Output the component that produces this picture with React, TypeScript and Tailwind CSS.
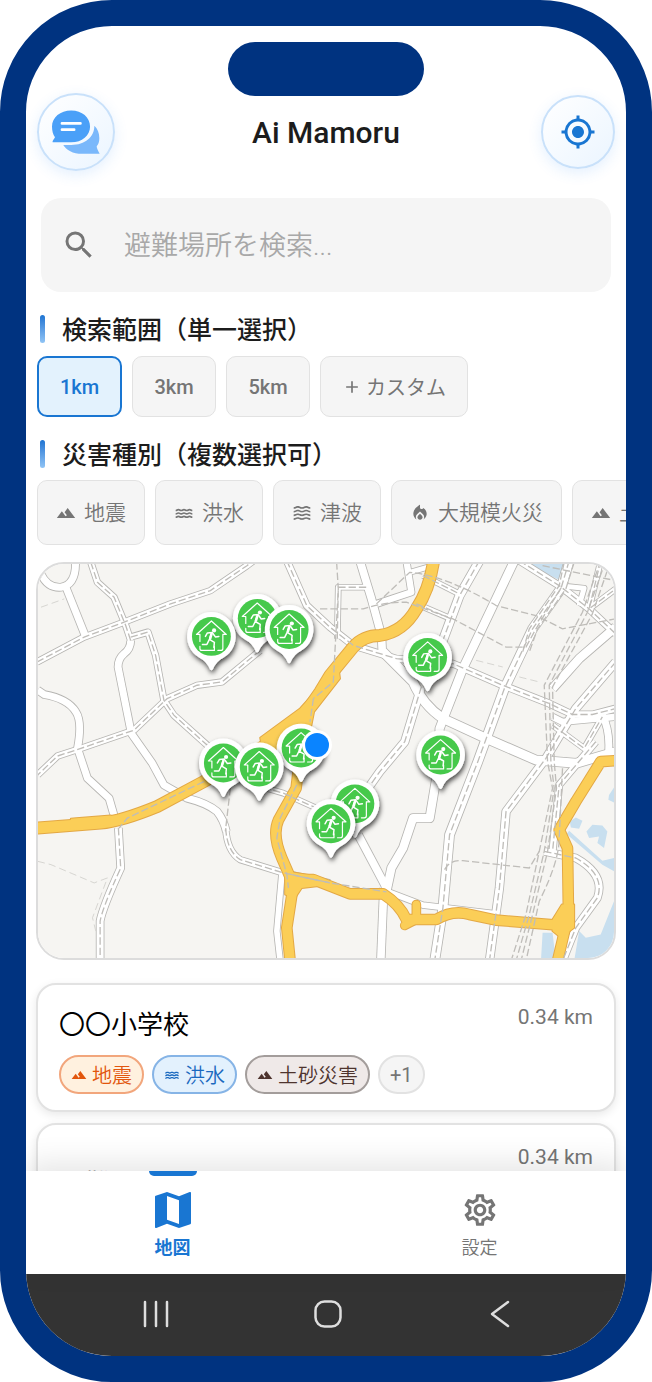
import React from 'react';
import {
  MdAdd,
  MdLocalFireDepartment,
  MdMap,
  MdMyLocation,
  MdOutlineSettings,
  MdSearch,
  MdTerrain,
  MdWater,
  MdWaves,
} from 'react-icons/md';

type Road = { d: string; w: number; dash?: boolean };

const roads: Road[] = [
  { d: 'M30 55Q50 98 90 95Q135 88 134 20', w: 26 },
  { d: 'M105 95L165 245', w: 26 },
  { d: 'M300 255Q300 280 280 295Q262 310 262 335L285 450L302 535L365 625L400 690L470 730Q530 745 560 770Q580 795 588 830', w: 26 },
  { d: 'M180 20L200 80L250 125L285 210L300 255', w: 22, dash: true },
  { d: 'M586 820Q590 890 630 915L760 955L900 985', w: 22, dash: true },
  { d: 'M18 320L160 245L280 200L420 145L540 105L650 30L670 15', w: 22, dash: true },
  { d: 'M300 245L352 230L375 300L400 435L430 480L530 570L600 640', w: 22, dash: true },
  { d: 'M690 285L575 380L500 390L410 430L310 525L150 580L80 603L20 660', w: 22, dash: true },
  { d: 'M20 405L40 418Q110 430 135 470Q155 500 140 580L170 670L235 730L258 810', w: 26 },
  { d: 'M263 820L270 940Q215 1060 208 1100V1220', w: 26, dash: true },
  { d: 'M755 960L740 1130L750 1220', w: 22 },
  { d: 'M640 680L760 715L860 760', w: 20, dash: true },
  { d: 'M770 15L830 150L900 215L970 270L1100 310L1270 325L1420 390L1560 445L1630 478H1690L1760 460', w: 24, dash: true },
  { d: 'M922 250L925 95H1010', w: 20, dash: true },
  { d: 'M990 15L1025 130L1055 240L1058 300', w: 28 },
  { d: 'M1130 15L1145 110L1040 145', w: 24 },
  { d: 'M1140 50L1210 30', w: 20 },
  { d: 'M1180 60L1290 115', w: 20, dash: true },
  { d: 'M1160 145L1265 190', w: 20, dash: true },
  { d: 'M1350 15L1290 120L1238 260', w: 30, dash: true },
  { d: 'M1175 395L1125 560L1050 650L990 735', w: 28, dash: true },
  { d: 'M1455 15L1300 340L1230 520L1225 640L1215 700L1200 790H1150L1120 880L1085 940L1070 1010', w: 30 },
  { d: 'M1060 290L1150 380Q1180 450 1240 490L1370 550L1520 615L1640 625L1760 590', w: 32 },
  { d: 'M1620 15L1595 100L1510 220L1425 400L1345 620L1260 840L1240 1060L1215 1220', w: 32, dash: true },
  { d: 'M1470 15L1590 90L1680 160L1760 235', w: 24, dash: true },
  { d: 'M1590 90L1665 98L1650 150', w: 20 },
  { d: 'M1760 215L1650 310L1570 400', w: 30 },
  { d: 'M1760 320L1640 460L1550 610L1430 770L1410 1000L1380 1220', w: 28, dash: true },
  { d: 'M1715 15L1680 160L1760 100', w: 20, dash: true },
  { d: 'M1570 485L1600 500L1760 485', w: 24 },
  { d: 'M1570 510L1665 580L1720 485', w: 20, dash: true },
  { d: 'M1720 480Q1745 530 1738 600', w: 26 },
  { d: 'M1700 560L1590 690L1570 890', w: 24, dash: true },
  { d: 'M1545 890L1640 910Q1730 960 1705 1030L1640 1120L1600 1220', w: 26, dash: true },
  { d: 'M985 840L1070 1000', w: 28 },
  { d: 'M1062 1000L1053 1220', w: 28 },
  { d: 'M1070 1010L1180 1052L1400 1078', w: 22 },
];

const rails = [
  'M870 160H1000Q1060 140 1130 140L1270 190L1430 275H1490L1520 220L1600 90',
  'M1040 145L1140 50Q1250 60 1400 150L1520 180L1600 220L1760 190',
  'M1715 15L1660 170L1545 390L1555 620L1570 700L1530 890L1490 1080L1445 1220',
  'M1730 15L1675 170L1560 390L1565 620L1575 700L1545 890L1500 1080L1460 1220',
  'M1745 15L1690 175L1570 395L1575 620L1582 700L1555 890L1510 1080L1475 1220',
  'M1605 20L1590 90L1500 220L1480 290',
  'M1635 20L1610 100L1525 220L1500 290',
  'M1245 945Q1260 915 1300 918L1500 940L1530 890',
  'M1600 640L1590 850Q1590 920 1530 1040L1490 1220',
  'M600 700L585 830',
  'M920 20L925 100L910 380L850 430',
  'M850 430L840 500M1540 30L1760 75',
];

const borders =
  'M20 920L60 930L190 985L230 970L185 1090L195 1130M30 155L100 130M1340 315L1420 335M1470 365L1530 380';

const highways = [
  { w: 36, d: 'M1212 15Q1200 100 1160 160Q1120 230 1050 240Q1000 240 970 275L900 360L870 410L800 510L690 580L520 680L380 755Q270 800 210 805L20 820' },
  { w: 32, d: 'M820 520L810 600L798 700L745 795Q725 840 755 910L790 990L770 1120L780 1220' },
  { w: 32, d: 'M785 975H850L960 1018H1060Q1110 1050 1130 1095L1220 1095Q1270 1065 1320 1080L1400 1097L1600 1113Q1615 1105 1615 1070' },
  { w: 26, d: 'M1160 1050V1095L1125 1113' },
  { w: 32, d: 'M1760 617L1715 620L1640 740L1590 825L1615 880L1618 1080L1585 1220' },
];

const junctions =
  'M925 330L855 410L810 460L690 548L700 600L780 590L842 520L852 470L930 370zM120 792L136 790L240 782V808L136 826L120 822zM765 950L860 965V995L815 1000L795 1030L765 1020zM1598 1050L1570 1095V1130L1595 1150L1635 1120V1050z';

const shelters = [
  [257, 618], [211, 636], [289, 629], [428, 657], [441, 755], [301, 748],
  [223, 763], [259, 767], [355, 804], [331, 824],
];

function Pin({ x, y }: { x: number; y: number }) {
  return (
    <g transform={`translate(${(x - 30) * 3} ${(y - 555) * 3}) scale(3)`}>
      <g filter="url(#pinShadow)">
        <path d="M0-24.5a24.5 24.5 0 0 1 12 45.800Q5 24.500 1.500 33Q0 35-1.500 33Q-5 24.500-12 21.300A24.500 24.500 0 0 1 0-24.500z" fill="#fff" />
      </g>
      <circle r="19.500" fill="#46c94b" />
      <g fill="none" stroke="#fff" strokeWidth="1.200" strokeLinecap="round" strokeLinejoin="round">
        <path d="M-11.500 5V-2H-15L0-15.500L15-2H11.500V12Q11.500 14 9.500 14H6.500M-11.500 10V12Q-11.500 14-9.500 14H3V10" />
        <path d="M-6 0L-4-3.500L1-4M0-3L-2 3L3 6L2.500 11M1.500-3L4 0.500L7.500 0M-2 3L-4.500 8H-9" strokeWidth="1.500" />
        <path d="M0-2L-1.200 2" strokeWidth="2.600" />
      </g>
      <circle cx="2.700" cy="-6" r="2.100" fill="#fff" />
    </g>
  );
}

function ShelterMap() {
  return (
    <svg
      viewBox="21 21 1734 1194"
      preserveAspectRatio="xMidYMid slice"
      className="block h-full w-full"
      role="img"
      aria-label="避難場所の地図"
    >
      <defs>
        <filter id="pinShadow" x="-40%" y="-40%" width="180%" height="180%">
          <feDropShadow dx="1" dy="3" stdDeviation="2.500" floodColor="#000" floodOpacity="0.7" />
        </filter>
      </defs>
      <rect x="0" y="0" width="1800" height="1260" fill="#f6f5f2" />
      <g fill="#c8dfef">
        <path d="M1470 15H1620L1600 78z" />
        <path d="M1755 1040L1715 1140L1670 1150L1650 1130L1635 1220H1760zM1570 1135H1540L1535 1220H1580z" />
        <path d="M1612 838L1720 930L1755 950V910L1720 918L1620 828zM1755 635L1735 625L1760 610zM1740 720L1760 690V745L1738 735z" />
        <path d="M1622 800L1640 788L1660 798L1650 822L1625 818zM1672 830L1690 810L1720 812L1735 830L1725 880L1705 865L1710 845L1680 850z" />
      </g>
      <g fill="none" strokeLinejoin="round" stroke="#b6b5b2">
        {roads.map((r) => <path key={r.d} d={r.d} strokeWidth={r.w} />)}
      </g>
      <g fill="none" strokeLinejoin="round" stroke="#fff">
        {roads.map((r) => <path key={r.d} d={r.d} strokeWidth={r.w - 5} />)}
      </g>
      <g fill="none" strokeLinejoin="round" strokeLinecap="round" stroke="#e3a845">
        {highways.map((h) => <path key={h.d} d={h.d} strokeWidth={h.w + 3} />)}
        <path d={junctions} strokeWidth="6" />
      </g>
      <g fill="none" strokeLinejoin="round" strokeLinecap="round" stroke="#fbce57">
        {highways.map((h) => <path key={h.d} d={h.d} strokeWidth={h.w - 3} />)}
        <path d={junctions} fill="#fbce57" stroke="none" />
      </g>
      <g fill="none" stroke="#bfbdb9" strokeWidth="4" strokeDasharray="22 9">
        {roads.filter((r) => r.dash).map((r) => <path key={r.d} d={r.d} />)}
        {rails.map((d) => <path key={d} d={d} />)}
        <path d="M520 680L290 790L265 820M800 690L750 790L740 850L770 960L775 1000M785 960L900 985L1070 1012" />
      </g>
      <path d={borders} fill="none" stroke="#d6d5d1" strokeWidth="3" strokeDasharray="22 12" />
      <g>
        {shelters.slice(0, 6).map(([x, y]) => <Pin key={`${x}-${y}`} x={x} y={y} />)}
        <circle cx="861" cy="570" r="45" fill="#fff" />
        <circle cx="861" cy="570" r="36" fill="#0a84ff" />
        {shelters.slice(6).map(([x, y]) => <Pin key={`${x}-${y}`} x={x} y={y} />)}
      </g>
    </svg>
  );
}

function ChatIcon() {
  return (
    <svg viewBox="60 65 145 135" className="h-[45px] w-12" aria-hidden="true">
      <path d="M188 112c10 10 15 22 15 37 0 12-3 20-8 25 0 6 4 12 9 23h-53c-28 0-48-12-57-27h24c42 0 70-24 70-58z" fill="#7ab8fb" />
      <path d="M118 66c33 0 57 21 57 48s-24 48-57 48H62c-2-3 4-9 7-15-6-9-9-20-9-33 0-27 25-48 58-48z" fill="#4aa0f8" />
      <path d="M90 105H146M90 124H127" stroke="#fff" strokeWidth="8" strokeLinecap="round" />
    </svg>
  );
}

function SectionTitle({ children }: { children: React.ReactNode }) {
  return (
    <div className="flex h-7 items-start gap-[17px] pl-[14px]">
      <span className="h-7 w-[5px] shrink-0 rounded-sm bg-linear-to-b from-[#1c74d2] to-[#90c4f5]" />
      <h2 className="whitespace-nowrap text-[25px] leading-8 font-medium text-[#1c1c1c]">{children}</h2>
    </div>
  );
}

const hazards = [
  { label: '地震', Icon: MdTerrain },
  { label: '洪水', Icon: MdWater },
  { label: '津波', Icon: MdWaves },
  { label: '大規模火災', Icon: MdLocalFireDepartment },
  { label: '土砂災害', Icon: MdTerrain },
];

const tags = [
  { label: '地震', Icon: MdTerrain, tone: 'border-[#f2a67c] bg-[#fff1df] text-[#e2560c]' },
  { label: '洪水', Icon: MdWater, tone: 'border-[#86b4e6] bg-[#e3f1fd] text-[#1a69bf]' },
  { label: '土砂災害', Icon: MdTerrain, tone: 'border-[#a39d9b] bg-[#efe9e8] text-[#4e342e]' },
];

const cardStyle = 'shrink-0 rounded-[20px] border-2 border-[#e2e2e2] bg-white px-[21px] shadow-[0_3px_10px_rgba(0,0,0,0.09)]';

export default function App() {
  const [range, setRange] = React.useState('1km');
  const [active, setActive] = React.useState<string[]>([]);
  const toggle = (label: string) =>
    setActive((list) => (list.includes(label) ? list.filter((l) => l !== label) : [...list, label]));

  return (
    <div className="flex min-h-screen bg-white font-['Roboto','Noto_Sans_CJK_JP',sans-serif]">
      <div className="relative flex min-w-0 flex-1 flex-col overflow-hidden rounded-[112px] border-[26px] border-[#003380] bg-white">
        <div className="absolute top-4 left-1/2 h-[54px] w-[196px] -translate-x-1/2 rounded-[27px] bg-[#003380]" />

        <header className="flex items-center justify-between px-[11px] pt-[67px]">
          <button aria-label="チャット" className="flex size-[78px] items-center justify-center rounded-full border-2 border-[#c9e1fa] bg-linear-to-br from-white to-[#ebf5ff] shadow-[0_4px_14px_rgba(66,150,245,0.14)]">
            <ChatIcon />
          </button>
          <h1 className="pt-[2px] pr-1 text-[30px] leading-10 font-medium text-[#1c1c1c]">Ai Mamoru</h1>
          <button aria-label="現在地" className="flex size-[74px] items-center justify-center rounded-full border-2 border-[#c9e1fa] bg-linear-to-br from-white to-[#ebf5ff] text-[#1976d2] shadow-[0_4px_14px_rgba(66,150,245,0.14)]">
            <MdMyLocation className="size-9" />
          </button>
        </header>

        <label className="mx-[15px] mt-[27px] flex h-[94px] items-center gap-[27px] rounded-[20px] bg-[#f5f5f5] pr-5 pl-5">
          <MdSearch className="size-9 shrink-0 text-[#757575]" />
          <input
            type="text"
            aria-label="避難場所を検索"
            placeholder="避難場所を検索..."
            className="min-w-0 flex-1 bg-transparent pt-[2px] text-[27px] font-[350] text-[#1c1c1c] outline-none placeholder:text-[#a8a8a8]"
          />
        </label>

        <div className="mt-[23px]">
          <SectionTitle>検索範囲（単一選択）</SectionTitle>
        </div>
        <div className="mt-[13px] flex gap-[10px] pl-[11px]">
          {['1km', '3km', '5km'].map((r) => (
            <button
              key={r}
              aria-pressed={range === r}
              onClick={() => setRange(r)}
              className={
                range === r
                  ? 'h-[61px] w-[85px] rounded-[10px] border-2 border-[#1976d2] bg-[#e3f2fd] text-[20px] font-medium text-[#1976d2]'
                  : 'h-[61px] w-[84px] rounded-[10px] border border-[#e2e2e2] bg-[#f5f5f5] text-[20px] font-medium text-[#757575]'
              }
            >
              {r}
            </button>
          ))}
          <button className="flex h-[61px] items-center gap-1 rounded-[10px] border border-[#e2e2e2] bg-[#f5f5f5] px-[21px] text-[20px] text-[#757575]">
            <MdAdd className="size-5" />
            <span className="pt-[3px]">カスタム</span>
          </button>
        </div>

        <div className="mt-[23px]">
          <SectionTitle>災害種別（複数選択可）</SectionTitle>
        </div>
        <div className="mt-3 flex gap-[10px] overflow-hidden pl-[11px]">
          {hazards.map(({ label, Icon }) => (
            <button
              key={label}
              aria-pressed={active.includes(label)}
              onClick={() => toggle(label)}
              className="flex h-[65px] shrink-0 items-center gap-2 rounded-[10px] border border-[#e2e2e2] bg-[#f5f5f5] px-[18px] text-[21px] font-[350] whitespace-nowrap text-[#757575] aria-pressed:border-[#1976d2]"
            >
              <Icon className="size-5" />
              <span className="pt-[3px]">{label}</span>
            </button>
          ))}
        </div>

        <div className="mx-[10px] mt-[17px] h-[398px] shrink-0 overflow-hidden rounded-[28px] border-2 border-[#dcdcdc]">
          <ShelterMap />
        </div>

        <main className="flex min-h-40 flex-1 basis-0 flex-col gap-[11px] overflow-hidden px-[10px] pt-[23px]">
          <article className={`${cardStyle} h-[129px]`}>
            <div className="flex items-start justify-between pt-5">
              <h3 className="text-[26px] leading-10 text-black">〇〇小学校</h3>
              <span className="text-[21px] leading-6 text-[#757575]">0.34 km</span>
            </div>
            <div className="mt-[10px] flex gap-2">
              {tags.map(({ label, Icon, tone }) => (
                <span key={label} className={`flex h-[39px] items-center gap-[5px] rounded-full border-2 px-[10px] text-[20px] font-[350] ${tone}`}>
                  <Icon className="size-4" />
                  <span className="pt-[3px]">{label}</span>
                </span>
              ))}
              <span className="flex h-[39px] items-center rounded-full border-2 border-[#e2e2e2] bg-[#f5f5f5] px-[10px] text-[20px] text-[#757575]">+1</span>
            </div>
          </article>
          <article className={`${cardStyle} h-[150px]`}>
            <div className="flex items-start justify-between pt-5">
              <h3 className="pt-[19px] text-[26px] leading-10 text-[#777]">避難場</h3>
              <span className="text-[21px] leading-6 text-[#757575]">0.34 km</span>
            </div>
          </article>
        </main>

        <nav aria-label="メイン" className="relative grid h-[103px] shrink-0 grid-cols-2 gap-[14px] bg-white shadow-[0_-8px_28px_rgba(0,0,0,0.1)]">
          <a href="#map" aria-current="page" className="flex flex-col items-center text-[#1976d2]">
            <span className="h-[5px] w-12 rounded-b-md bg-[#1976d2]" />
            <MdMap className="mt-[10px] size-12" />
            <span className="text-[18px] leading-7 font-bold">地図</span>
          </a>
          <a href="#settings" className="flex flex-col items-center pt-5 text-[#757575]">
            <MdOutlineSettings className="size-[38px]" />
            <span className="mt-[5px] text-[18px] leading-7 font-[350]">設定</span>
          </a>
        </nav>

        <div className="grid h-[82px] shrink-0 grid-cols-3 items-center bg-[#333] pr-[40px] pb-[2px] pl-[44px]">
          <button aria-label="履歴" className="flex justify-center">
            <svg viewBox="0 0 28 28" className="size-7" fill="none" stroke="#dedede" strokeWidth="2.5" strokeLinecap="round">
              <path d="M3 2V26M14 2V26M25 2V26" />
            </svg>
          </button>
          <button aria-label="ホーム" className="flex justify-center">
            <svg viewBox="0 0 28 28" className="size-7" fill="none" stroke="#dedede" strokeWidth="2.5">
              <rect x="1.500" y="1.500" width="25" height="25" rx="9" />
            </svg>
          </button>
          <button aria-label="戻る" className="flex justify-center">
            <svg viewBox="0 0 28 28" className="size-7" fill="none" stroke="#dedede" strokeWidth="2.5" strokeLinecap="round" strokeLinejoin="round">
              <path d="M22 2L6 14L22 26" />
            </svg>
          </button>
        </div>
      </div>
    </div>
  );
}
